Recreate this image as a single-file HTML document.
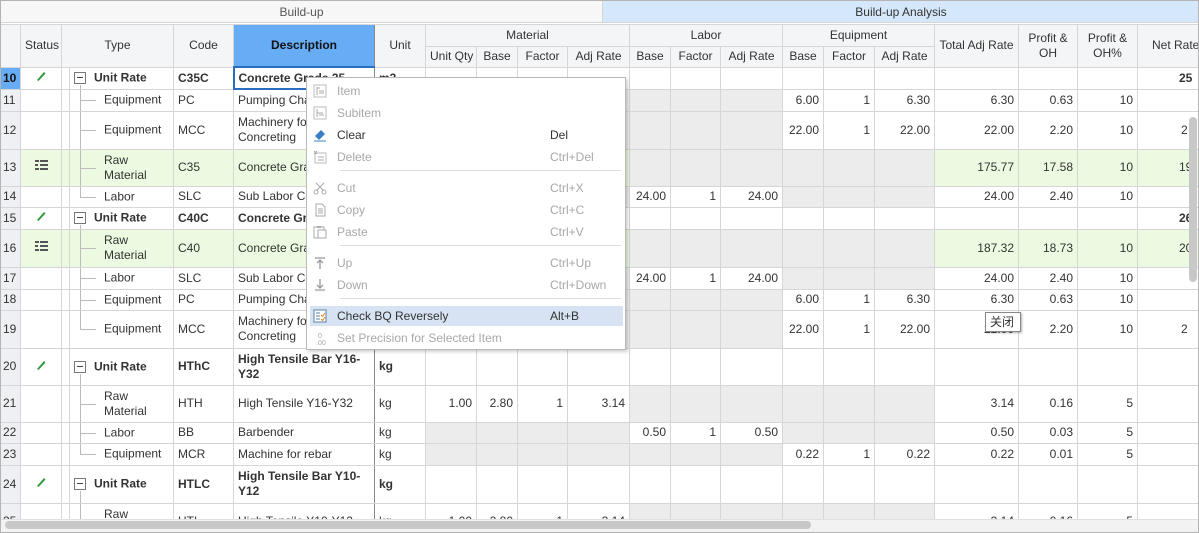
<!DOCTYPE html>
<html><head><meta charset="utf-8">
<style>
*{box-sizing:border-box;margin:0;padding:0}
body{width:1199px;height:533px;overflow:hidden;background:#fff;font-family:"Liberation Sans",Arial,sans-serif;font-size:12px;color:#333;position:relative}
#wrap{position:absolute;left:0;top:0;width:1199px;height:533px;border:1px solid #b4b4b4;overflow:hidden}
table{position:absolute;left:-1px;top:0;border-collapse:collapse;table-layout:fixed;width:1239px}
td,th{border:1px solid #d6d6d6;overflow:hidden;white-space:nowrap;font-weight:normal;padding:0 4px;line-height:15px}
th{background:#f4f5f7;text-align:center}
td.n{background:#eef0f4;padding:0 2px;font-size:12px}
td.r{text-align:right}
td.g{background:#ececec}
tr.gr td{background:#ebfae0}
tr.gr td.g{background:#ececec}
tr.gr td.n{background:#eef0f4}
.b{font-weight:bold}
td.d{border-right:1px solid #8a8a8a}
th.d{border-right:1px solid #8a8a8a}
.wr{white-space:normal;line-height:15px}
td.t{position:relative;padding:0}
.box{position:absolute;left:4px;top:50%;margin-top:-6px;width:12px;height:12px;border:1px solid #777;background:#fff}
.box:after{content:"";position:absolute;left:2px;top:4px;width:6px;height:1px;background:#444}
.vl{position:absolute;left:10px;width:1px;background:#bbb;top:0;bottom:0}
.hl{position:absolute;left:10px;width:16px;height:1px;background:#bbb;top:50%}
.tt{position:absolute;left:24px;top:50%;transform:translateY(-50%)}
.tc{position:absolute;left:34px;top:50%;transform:translateY(-50%);white-space:normal;line-height:15px}
.menu{position:absolute;left:306px;top:77px;width:320px;height:273px;background:#fff;border:1px solid #b9b9b9;box-shadow:2px 2px 3px rgba(0,0,0,.18)}
.mi{position:absolute;left:0;width:318px;height:20px;line-height:20px;color:#a8a8a8}
.mi .l{position:absolute;left:30px}
.mi .k{position:absolute;left:243px}
.mi.on{color:#333}
.mi.hi{background:#d7e3f3;color:#333;left:3px;width:313px}
.mi.hi .l{left:27px}.mi.hi .k{left:240px}
.sep{position:absolute;left:33px;width:281px;height:1px;background:#dcdcdc}
.ic{position:absolute;left:6px;top:3px;width:14px;height:14px}
</style></head><body>
<div id="wrap">
<table>
<colgroup>
<col style="width:20px"><col style="width:41px"><col style="width:8px"><col style="width:104px"><col style="width:60px"><col style="width:141px"><col style="width:51px"><col style="width:51px"><col style="width:41px"><col style="width:50px"><col style="width:62px"><col style="width:41px"><col style="width:50px"><col style="width:62px"><col style="width:41px"><col style="width:51px"><col style="width:60px"><col style="width:84px"><col style="width:59px"><col style="width:60px"><col style="width:102px">
</colgroup>
<tr style="height:23px"><th colspan="21" style="border-top:none;background:#fff"></th></tr>
<tr style="height:22px"><th rowspan="2"></th><th rowspan="2">Status</th><th rowspan="2" colspan="2">Type</th><th rowspan="2">Code</th><th rowspan="2" class="d" style="background:#67adf5;color:#111;font-weight:bold">Description</th><th rowspan="2">Unit</th><th colspan="4">Material</th><th colspan="3">Labor</th><th colspan="3">Equipment</th><th rowspan="2">Total Adj Rate</th><th rowspan="2" class="wr">Profit &amp;<br>OH</th><th rowspan="2" class="wr">Profit &amp;<br>OH%</th><th rowspan="2" style="text-align:left;padding-left:14px">Net Rate</th></tr>
<tr style="height:21px"><th>Unit Qty</th><th>Base</th><th>Factor</th><th>Adj Rate</th><th>Base</th><th>Factor</th><th>Adj Rate</th><th>Base</th><th>Factor</th><th>Adj Rate</th></tr>

<tr style="height:22px"><td class="n b" style="background:#67adf5;color:#111">10</td><td style="text-align:center"><svg width="12" height="12" viewBox="0 0 12 12"><path d="M2 10 L9 2 L10.5 3.5 L3.5 11 Z" fill="#2e9a3a"/></svg></td><td></td><td class="t"><span class="box"></span><span class="tt b">Unit Rate</span><span class="vl" style="top:17px"></span></td><td class="b">C35C</td><td class="d b" style="border:2px solid #2a6fbf;border-right:1px solid #8a8a8a">Concrete Grade 35</td><td class="b">m3</td><td></td><td></td><td></td><td></td><td></td><td></td><td></td><td></td><td></td><td></td><td></td><td></td><td></td><td class="r b" style="text-align:left;padding-left:41px">25</td></tr>
<tr style="height:22px"><td class="n">11</td><td></td><td></td><td class="t"><span class="vl"></span><span class="hl"></span><span class="tc">Equipment</span></td><td>PC</td><td class="d">Pumping Charge</td><td>m3</td><td class="g"></td><td class="g"></td><td class="g"></td><td class="g"></td><td class="g"></td><td class="g"></td><td class="g"></td><td class="r">6.00</td><td class="r">1</td><td class="r">6.30</td><td class="r">6.30</td><td class="r">0.63</td><td class="r">10</td><td></td></tr>
<tr style="height:38px"><td class="n">12</td><td></td><td></td><td class="t"><span class="vl"></span><span class="hl"></span><span class="tc">Equipment</span></td><td>MCC</td><td class="d wr">Machinery for Concreting</td><td>m3</td><td class="g"></td><td class="g"></td><td class="g"></td><td class="g"></td><td class="g"></td><td class="g"></td><td class="g"></td><td class="r">22.00</td><td class="r">1</td><td class="r">22.00</td><td class="r">22.00</td><td class="r">2.20</td><td class="r">10</td><td style="padding-left:43px">2</td></tr>
<tr class="gr" style="height:37px"><td class="n">13</td><td style="text-align:center"><svg width="13" height="11" viewBox="0 0 13 11"><rect x="0" y="0" width="4" height="2" fill="#555"/><rect x="5" y="0" width="8" height="2" fill="#555"/><rect x="0" y="4" width="3" height="2" fill="#555"/><rect x="5" y="4" width="8" height="2" fill="#555"/><rect x="0" y="8" width="4" height="2" fill="#555"/><rect x="5" y="8" width="8" height="2" fill="#555"/></svg></td><td></td><td class="t"><span class="vl"></span><span class="hl"></span><span class="tc">Raw<br>Material</span></td><td>C35</td><td class="d">Concrete Grade 35</td><td>m3</td><td></td><td></td><td></td><td></td><td class="g"></td><td class="g"></td><td class="g"></td><td class="g"></td><td class="g"></td><td class="g"></td><td class="r">175.77</td><td class="r">17.58</td><td class="r">10</td><td style="padding-left:41px">19</td></tr>
<tr style="height:21px"><td class="n">14</td><td></td><td></td><td class="t"><span class="vl" style="bottom:50%"></span><span class="hl"></span><span class="tc">Labor</span></td><td>SLC</td><td class="d">Sub Labor Concrete</td><td>m3</td><td class="g"></td><td class="g"></td><td class="g"></td><td class="g"></td><td class="r">24.00</td><td class="r">1</td><td class="r">24.00</td><td class="g"></td><td class="g"></td><td class="g"></td><td class="r">24.00</td><td class="r">2.40</td><td class="r">10</td><td></td></tr>
<tr style="height:22px"><td class="n">15</td><td style="text-align:center"><svg width="12" height="12" viewBox="0 0 12 12"><path d="M2 10 L9 2 L10.5 3.5 L3.5 11 Z" fill="#2e9a3a"/></svg></td><td></td><td class="t"><span class="box"></span><span class="tt b">Unit Rate</span><span class="vl" style="top:17px"></span></td><td class="b">C40C</td><td class="d b">Concrete Grade 40</td><td class="b">m3</td><td></td><td></td><td></td><td></td><td></td><td></td><td></td><td></td><td></td><td></td><td></td><td></td><td></td><td class="b" style="padding-left:41px">26</td></tr>
<tr class="gr" style="height:38px"><td class="n">16</td><td style="text-align:center"><svg width="13" height="11" viewBox="0 0 13 11"><rect x="0" y="0" width="4" height="2" fill="#555"/><rect x="5" y="0" width="8" height="2" fill="#555"/><rect x="0" y="4" width="3" height="2" fill="#555"/><rect x="5" y="4" width="8" height="2" fill="#555"/><rect x="0" y="8" width="4" height="2" fill="#555"/><rect x="5" y="8" width="8" height="2" fill="#555"/></svg></td><td></td><td class="t"><span class="vl"></span><span class="hl"></span><span class="tc">Raw<br>Material</span></td><td>C40</td><td class="d">Concrete Grade 40</td><td>m3</td><td></td><td></td><td></td><td></td><td class="g"></td><td class="g"></td><td class="g"></td><td class="g"></td><td class="g"></td><td class="g"></td><td class="r">187.32</td><td class="r">18.73</td><td class="r">10</td><td style="padding-left:41px">20</td></tr>
<tr style="height:22px"><td class="n">17</td><td></td><td></td><td class="t"><span class="vl"></span><span class="hl"></span><span class="tc">Labor</span></td><td>SLC</td><td class="d">Sub Labor Concrete</td><td>m3</td><td class="g"></td><td class="g"></td><td class="g"></td><td class="g"></td><td class="r">24.00</td><td class="r">1</td><td class="r">24.00</td><td class="g"></td><td class="g"></td><td class="g"></td><td class="r">24.00</td><td class="r">2.40</td><td class="r">10</td><td></td></tr>
<tr style="height:21px"><td class="n">18</td><td></td><td></td><td class="t"><span class="vl"></span><span class="hl"></span><span class="tc">Equipment</span></td><td>PC</td><td class="d">Pumping Charge</td><td>m3</td><td class="g"></td><td class="g"></td><td class="g"></td><td class="g"></td><td class="g"></td><td class="g"></td><td class="g"></td><td class="r">6.00</td><td class="r">1</td><td class="r">6.30</td><td class="r">6.30</td><td class="r">0.63</td><td class="r">10</td><td></td></tr>
<tr style="height:38px"><td class="n">19</td><td></td><td></td><td class="t"><span class="vl" style="bottom:50%"></span><span class="hl"></span><span class="tc">Equipment</span></td><td>MCC</td><td class="d wr">Machinery for Concreting</td><td>m3</td><td class="g"></td><td class="g"></td><td class="g"></td><td class="g"></td><td class="g"></td><td class="g"></td><td class="g"></td><td class="r">22.00</td><td class="r">1</td><td class="r">22.00</td><td class="r">22.00</td><td class="r">2.20</td><td class="r">10</td><td style="padding-left:43px">2</td></tr>
<tr style="height:37px"><td class="n">20</td><td style="text-align:center"><svg width="12" height="12" viewBox="0 0 12 12"><path d="M2 10 L9 2 L10.5 3.5 L3.5 11 Z" fill="#2e9a3a"/></svg></td><td></td><td class="t"><span class="box"></span><span class="tt b">Unit Rate</span><span class="vl" style="top:25px"></span></td><td class="b">HThC</td><td class="d b wr">High Tensile Bar Y16-Y32</td><td class="b">kg</td><td></td><td></td><td></td><td></td><td></td><td></td><td></td><td></td><td></td><td></td><td></td><td></td><td></td><td></td></tr>
<tr style="height:37px"><td class="n">21</td><td></td><td></td><td class="t"><span class="vl"></span><span class="hl"></span><span class="tc">Raw<br>Material</span></td><td>HTH</td><td class="d">High Tensile Y16-Y32</td><td>kg</td><td class="r">1.00</td><td class="r">2.80</td><td class="r">1</td><td class="r">3.14</td><td class="g"></td><td class="g"></td><td class="g"></td><td class="g"></td><td class="g"></td><td class="g"></td><td class="r">3.14</td><td class="r">0.16</td><td class="r">5</td><td></td></tr>
<tr style="height:21px"><td class="n">22</td><td></td><td></td><td class="t"><span class="vl"></span><span class="hl"></span><span class="tc">Labor</span></td><td>BB</td><td class="d">Barbender</td><td>kg</td><td class="g"></td><td class="g"></td><td class="g"></td><td class="g"></td><td class="r">0.50</td><td class="r">1</td><td class="r">0.50</td><td class="g"></td><td class="g"></td><td class="g"></td><td class="r">0.50</td><td class="r">0.03</td><td class="r">5</td><td></td></tr>
<tr style="height:22px"><td class="n">23</td><td></td><td></td><td class="t"><span class="vl" style="bottom:50%"></span><span class="hl"></span><span class="tc">Equipment</span></td><td>MCR</td><td class="d">Machine for rebar</td><td>kg</td><td class="g"></td><td class="g"></td><td class="g"></td><td class="g"></td><td class="g"></td><td class="g"></td><td class="g"></td><td class="r">0.22</td><td class="r">1</td><td class="r">0.22</td><td class="r">0.22</td><td class="r">0.01</td><td class="r">5</td><td></td></tr>
<tr style="height:38px"><td class="n">24</td><td style="text-align:center"><svg width="12" height="12" viewBox="0 0 12 12"><path d="M2 10 L9 2 L10.5 3.5 L3.5 11 Z" fill="#2e9a3a"/></svg></td><td></td><td class="t"><span class="box"></span><span class="tt b">Unit Rate</span><span class="vl" style="top:25px"></span></td><td class="b">HTLC</td><td class="d b wr">High Tensile Bar Y10-Y12</td><td class="b">kg</td><td></td><td></td><td></td><td></td><td></td><td></td><td></td><td></td><td></td><td></td><td></td><td></td><td></td><td></td></tr>
<tr style="height:37px"><td class="n">25</td><td></td><td></td><td class="t"><span class="vl"></span><span class="hl"></span><span class="tc">Raw<br>Material</span></td><td>HTL</td><td class="d">High Tensile Y10-Y12</td><td>kg</td><td class="r">1.00</td><td class="r">2.80</td><td class="r">1</td><td class="r">3.14</td><td class="g"></td><td class="g"></td><td class="g"></td><td class="g"></td><td class="g"></td><td class="g"></td><td class="r">3.14</td><td class="r">0.16</td><td class="r">5</td><td></td></tr>
</table>
<div style="position:absolute;left:0;top:0;width:601px;height:22px;background:#f7f7f7;border-bottom:1px solid #d6d6d6;text-align:center;line-height:22px;color:#555">Build-up</div>
<div style="position:absolute;left:601px;top:0;width:597px;height:22px;background:#d5e8fb;border-bottom:1px solid #d6d6d6;border-left:1px solid #d6d6d6;text-align:center;line-height:22px;color:#333">Build-up Analysis</div>
<div style="position:absolute;left:0;top:518px;width:1197px;height:14px;background:#f2f2f2;border-top:1px solid #e0e0e0"></div>
<div style="position:absolute;left:4px;top:520px;width:806px;height:8px;background:#c8c8c8;border-radius:4px"></div>
<div style="position:absolute;left:1188px;top:116px;width:8px;height:165px;background:#c8c8c8;border-radius:4px"></div>
</div>

<div class="menu">
<div class="mi" style="top:3px"><svg class="ic" viewBox="0 0 14 14"><rect x="1" y="1" width="12" height="12" fill="none" stroke="#bbb"/><path d="M4 3v8M4 4h3M6 7h5M6 9h5" stroke="#aaa"/></svg><span class="l">Item</span></div>
<div class="mi" style="top:25px"><svg class="ic" viewBox="0 0 14 14"><rect x="1" y="1" width="12" height="12" fill="none" stroke="#bbb"/><path d="M4 3v8M4 7h6M6 9h5" stroke="#aaa"/></svg><span class="l">Subitem</span></div>
<div class="mi on" style="top:47px"><svg class="ic" viewBox="0 0 14 14"><path d="M2 8 L8 2 L12 6 L6 12 Z" fill="#3a7fc4"/><path d="M1 13h12" stroke="#3a7fc4"/></svg><span class="l">Clear</span><span class="k">Del</span></div>
<div class="mi" style="top:69px"><svg class="ic" viewBox="0 0 14 14"><rect x="2" y="3" width="11" height="10" fill="none" stroke="#bbb"/><path d="M1 1l3 3M4 1l-3 3M5 7h6M5 10h6" stroke="#aaa"/></svg><span class="l">Delete</span><span class="k">Ctrl+Del</span></div>
<div class="sep" style="top:92px"></div>
<div class="mi" style="top:100px"><svg class="ic" viewBox="0 0 14 14"><circle cx="3" cy="11" r="2" fill="none" stroke="#aaa"/><circle cx="11" cy="11" r="2" fill="none" stroke="#aaa"/><path d="M4 9L11 2M10 9L3 2" stroke="#aaa"/></svg><span class="l">Cut</span><span class="k">Ctrl+X</span></div>
<div class="mi" style="top:122px"><svg class="ic" viewBox="0 0 14 14"><path d="M3 1h6l3 3v9H3z" fill="none" stroke="#aaa"/><path d="M5 6h5M5 8h5M5 10h5" stroke="#aaa"/></svg><span class="l">Copy</span><span class="k">Ctrl+C</span></div>
<div class="mi" style="top:144px"><svg class="ic" viewBox="0 0 14 14"><rect x="1" y="2" width="10" height="11" fill="none" stroke="#aaa"/><rect x="5" y="5" width="8" height="8" fill="#fff" stroke="#aaa"/><rect x="4" y="1" width="4" height="2" fill="#aaa"/></svg><span class="l">Paste</span><span class="k">Ctrl+V</span></div>
<div class="sep" style="top:167px"></div>
<div class="mi" style="top:175px"><svg class="ic" viewBox="0 0 14 14"><path d="M2 2h10M7 4v9M4 7l3-3 3 3" stroke="#999" fill="none" stroke-width="1.3"/></svg><span class="l">Up</span><span class="k">Ctrl+Up</span></div>
<div class="mi" style="top:197px"><svg class="ic" viewBox="0 0 14 14"><path d="M2 12h10M7 1v9M4 7l3 3 3-3" stroke="#999" fill="none" stroke-width="1.3"/></svg><span class="l">Down</span><span class="k">Ctrl+Down</span></div>
<div class="sep" style="top:220px"></div>
<div class="mi hi" style="top:228px"><svg class="ic" style="left:3px" viewBox="0 0 14 14"><rect x="1" y="1" width="12" height="12" fill="#fff" stroke="#5a7fa8"/><path d="M3 4h4M3 7h4M3 10h4" stroke="#5a7fa8"/><path d="M8 6l1.5 1.5L12 4M8 10l1.5 1.5L12 8" stroke="#d98a1c" fill="none"/></svg><span class="l">Check BQ Reversely</span><span class="k">Alt+B</span></div>
<div class="mi" style="top:250px"><svg class="ic" viewBox="0 0 14 14"><text x="5" y="7" font-size="7" fill="#aaa" font-family="Liberation Sans">0</text><text x="3" y="14" font-size="7" fill="#aaa" font-family="Liberation Sans">.00</text></svg><span class="l">Set Precision for Selected Item</span></div>
</div>

<div style="position:absolute;left:985px;top:312px;width:36px;height:20px;background:#fff;border:1px solid #888;box-shadow:1px 1px 2px rgba(0,0,0,.3);font-family:'Liberation Sans','Noto Sans CJK SC',sans-serif;font-size:12px;line-height:18px;padding-left:4px;color:#333">关闭</div>
</body></html>
